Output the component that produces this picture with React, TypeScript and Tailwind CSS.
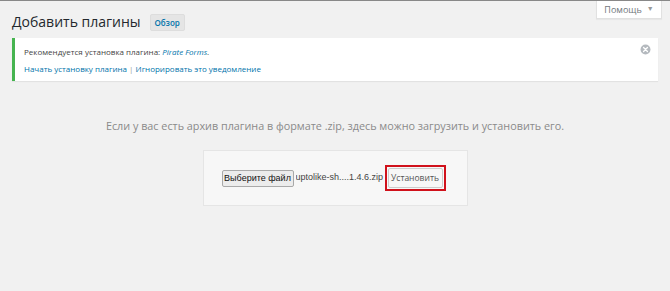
import React from 'react';

const sans = { fontFamily: '"Open Sans", "Noto Sans", sans-serif' };
const system = { fontFamily: '"Liberation Sans", Arial, sans-serif' };

function HelpTab() {
  return (
    <div className="absolute right-[8px] top-0 flex h-[18px] w-[66px] items-center justify-center gap-[5px] border border-t-0 border-[#e1e1e1] bg-white text-[9px] text-[#72777c] shadow-[0_1px_1px_rgba(0,0,0,0.04)]">
      <span>Помощь</span>
      <span className="text-[7px] text-[#999]">▼</span>
    </div>
  );
}

function DismissIcon() {
  return (
    <svg width="11" height="11" viewBox="0 0 20 20" className="text-[#b4b9be]">
      <circle cx="10" cy="10" r="9" fill="currentColor" />
      <path d="M6.5 6.5l7 7M13.5 6.5l-7 7" stroke="#fff" strokeWidth="2.4" strokeLinecap="round" />
    </svg>
  );
}

function Notice() {
  return (
    <div className="relative mx-[12px] mt-[5px] border-l-[3px] border-[#46b450] bg-white pb-[4px] pl-[9px] pr-[30px] pt-[5px] text-[8px] leading-[17px] text-[#444] shadow-[0_1px_1px_rgba(0,0,0,0.06)]">
      <p>
        Рекомендуется установка плагина: <em className="text-[#0073aa]">Pirate Forms</em>.
      </p>
      <p>
        <span className="text-[#0073aa]">Начать установку плагина</span>
        <span className="text-[#999]"> | </span>
        <span className="text-[#0073aa]">Игнорировать это уведомление</span>
      </p>
      <div className="absolute right-[7px] top-[6px]">
        <DismissIcon />
      </div>
    </div>
  );
}

function UploadForm() {
  return (
    <div className="mx-auto mt-[16px] flex h-[56px] w-[265px] items-center whitespace-nowrap border border-[#e5e5e5] bg-[#f7f7f7] pl-[18px]">
      <button
        className="h-[17px] w-[72px] shrink-0 rounded-[2px] border border-[#a9a9a9] bg-[#ececec] text-[9px] leading-none text-[#111]"
        style={system}
      >
        Выберите файл
      </button>
      <span className="ml-[2px] w-[89px] shrink-0 overflow-hidden text-[9px] text-[#444]" style={system}>
        uptolike-sh....1.4.6.zip
      </span>
      <div className="shrink-0 border-2 border-[#d0111b] p-px">
        <button className="flex h-[20px] w-[55px] items-center justify-center rounded-[2px] border border-[#ccc] bg-[#f7f7f7] text-[8.5px] text-[#555]">
          Установить
        </button>
      </div>
    </div>
  );
}

export default function App() {
  return (
    <div className="relative h-[291px] w-[670px] overflow-hidden border-t border-[#888] bg-[#f1f1f1]" style={sans}>
      <HelpTab />
      <div className="flex items-center gap-[9px] px-[12px] pt-[10px]">
        <h1 className="text-[14px] font-normal leading-[22px] text-[#23282d]">Добавить плагины</h1>
        <span className="rounded-[2px] border border-[#ddd] bg-[#e5e5e5] px-[4px] text-[8px] font-semibold leading-[15px] text-[#0073aa]">
          Обзор
        </span>
      </div>
      <Notice />
      <p className="mt-[36px] text-center text-[10.8px] leading-[17px] text-[#8a8a8a]">
        Если у вас есть архив плагина в формате .zip, здесь можно загрузить и установить его.
      </p>
      <UploadForm />
    </div>
  );
}
